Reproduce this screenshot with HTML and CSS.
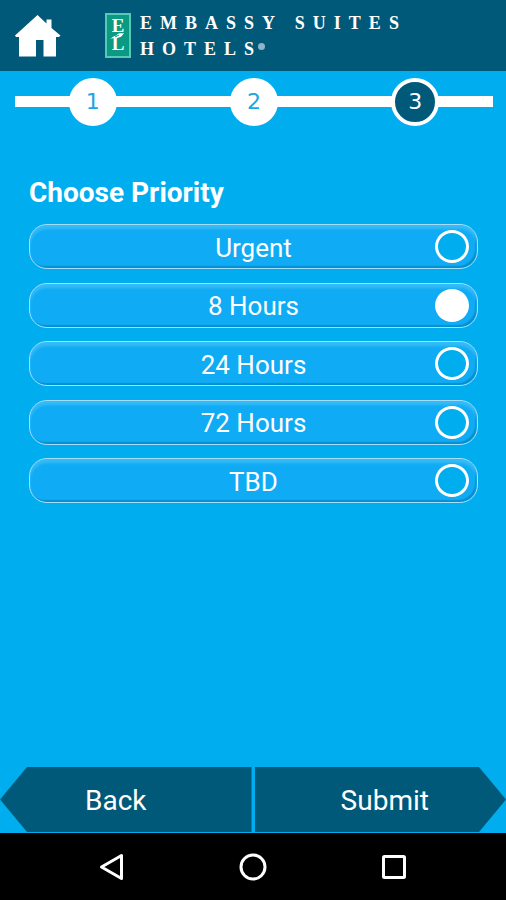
FILE: index.html
```html
<!DOCTYPE html>
<html lang="en">
<head>
<meta charset="utf-8">
<meta name="viewport" content="width=device-width, initial-scale=1">
<title>Choose Priority</title>
<link rel="stylesheet" href="styles.css">
</head>
<body>
<header class="header">
  <a class="home" href="#" aria-label="Home">
    <svg width="46" height="42" viewBox="0 0 46 42" aria-hidden="true"><path fill="#fff" d="M22.500 0L31.500 8.500V4.500H36.500V13L45.500 20.500L44 22H41V41.500H28.500V25H21V41.500H4V22H1L0 20.500Z"/></svg>
  </a>
  <div class="brand">
    <div class="crest" aria-hidden="true">
      <span>E</span>
      <span>L</span>
      <svg class="leaf" width="14" height="8" viewBox="0 0 14 8"><path d="M0 7C3 6 4 3 6 4C8 0 12 2 14 1C12 3 12 6 8 5C6 8 4 5 0 7Z" fill="#fff"/><path d="M5 5L9 3" stroke="#0a9a83" fill="none"/></svg>
    </div>
    <div class="wordmark">
      <span>EMBASSY SUITES</span>
      <span>HOTELS<i class="mark"></i></span>
    </div>
  </div>
</header>
<ol class="steps">
  <li><span class="step">1</span></li>
  <li><span class="step">2</span></li>
  <li aria-current="step"><span class="step current">3</span></li>
</ol>
<main class="main">
  <h1 class="title" id="priority-title">Choose Priority</h1>
  <div class="options" role="radiogroup" aria-labelledby="priority-title">
    <label class="option" for="p1"><span>Urgent</span><input type="radio" name="priority" id="p1"></label>
    <label class="option" for="p2"><span>8 Hours</span><input type="radio" name="priority" id="p2" checked></label>
    <label class="option" for="p3"><span>24 Hours</span><input type="radio" name="priority" id="p3"></label>
    <label class="option" for="p4"><span>72 Hours</span><input type="radio" name="priority" id="p4"></label>
    <label class="option" for="p5"><span>TBD</span><input type="radio" name="priority" id="p5"></label>
  </div>
</main>
<div class="actions">
  <button class="action back" type="button">Back</button>
  <button class="action submit" type="button">Submit</button>
</div>
<nav class="system" aria-label="System">
  <button type="button" aria-label="Back"><svg width="28" height="28" viewBox="0 0 28 28"><path d="M23.500 2.500V25.500L3.500 14Z"/></svg></button>
  <button type="button" aria-label="Home"><svg width="28" height="28" viewBox="0 0 28 28"><circle cx="14" cy="14" r="12"/></svg></button>
  <button type="button" aria-label="Recent apps"><svg width="28" height="28" viewBox="0 0 28 28"><rect x="3.500" y="3.500" width="21" height="21" rx="1"/></svg></button>
</nav>
</body>
</html>
```
FILE: styles.css
```css
* {
  box-sizing: border-box;
}

body {
  margin: 0;
  min-height: 100vh;
  display: flex;
  flex-direction: column;
  background: #00aeef;
  color: #fff;
  font-family: Roboto, sans-serif;
}

button {
  border: 0;
  padding: 0;
  color: inherit;
  font: inherit;
}

.header {
  display: flex;
  align-items: flex-start;
  gap: 44px;
  min-height: 71px;
  padding: 10px 15px 0;
  background: #005979;
}

.home {
  padding-top: 5px;
}

.home svg,
.leaf {
  display: block;
}

.brand {
  display: flex;
  gap: 8px;
}

.crest {
  position: relative;
  display: flex;
  flex-direction: column;
  align-items: center;
  width: 26px;
  height: 45px;
  margin-top: 3px;
  padding-top: 2px;
  border: 2px solid #58c9b4;
  background: #0a9a83;
  font: bold 19px/18px "Liberation Serif", serif;
}

.leaf {
  position: absolute;
  top: 17px;
  left: 3px;
}

.wordmark {
  display: grid;
  align-content: start;
  font: bold 18px/26px "Liberation Serif", serif;
  letter-spacing: 8px;
  white-space: nowrap;
  padding-left: 1px;
}

.mark {
  display: inline-block;
  width: 7px;
  height: 7px;
  margin-left: -4px;
  border-radius: 50%;
  background: #8fb4c6;
  vertical-align: 5px;
}

.steps {
  display: grid;
  grid-template-columns: repeat(3, 1fr);
  margin: 7px 13px 0 15px;
  padding: 0;
  list-style: none;
  background: linear-gradient(#fff, #fff) 0 18px / 100% 11px no-repeat;
}

.steps li {
  display: flex;
  justify-content: center;
}

.steps li:first-child {
  padding-right: 4px;
}

.steps li:last-child {
  padding-left: 4px;
}

.step {
  width: 48px;
  height: 48px;
  border: 4px solid #fff;
  border-radius: 50%;
  background: #fff;
  color: #1ba6e0;
  font: 22px/40px "DejaVu Sans", sans-serif;
  text-align: center;
}

.current {
  background: #005979;
  color: #fff;
}

.main {
  flex: 1;
  padding: 51px 28px 24px 29px;
}

.title {
  margin: 0 0 15px;
  font-size: 28px;
  line-height: 32px;
  font-weight: 700;
}

.options {
  display: grid;
  align-content: space-between;
  min-height: 279px;
}

.option {
  display: grid;
  grid-template-columns: 34px 1fr 34px;
  align-items: center;
  height: 45px;
  padding: 0 8px;
  border: 1px solid #a5dfff;
  border-radius: 18px;
  background: #10abf5;
  box-shadow: inset 0 4px 3px #35bcf6, inset -2px -2px 1px #078fd0;
  font-size: 26px;
  line-height: 32px;
  text-align: center;
}

.option span {
  grid-column: 2;
  padding-top: 2px;
}

.option input {
  appearance: none;
  width: 34px;
  height: 33px;
  margin: 0;
  border: 3px solid #fff;
  border-radius: 50%;
  background: #00aeef;
}

.option input:checked {
  background: #fff;
}

.actions {
  display: grid;
  grid-template-columns: 1fr 1fr;
  gap: 3px;
  padding-bottom: 1px;
}

.action {
  height: 65px;
  padding-top: 2px;
  background: #005979;
  font-size: 28px;
  line-height: 32px;
}

.back {
  padding-right: 20px;
  clip-path: polygon(27px 0, 100% 0, 100% 100%, 27px 100%, 0 50%);
}

.submit {
  padding-left: 9px;
  clip-path: polygon(0 0, calc(100% - 27px) 0, 100% 50%, calc(100% - 27px) 100%, 0 100%);
}

.system {
  display: flex;
  justify-content: center;
  gap: 113px;
  height: 67px;
  background: #000;
}

.system button {
  background: none;
}

.system svg {
  display: block;
  fill: none;
  stroke: #fff;
  stroke-width: 3;
  stroke-linejoin: round;
}
```
